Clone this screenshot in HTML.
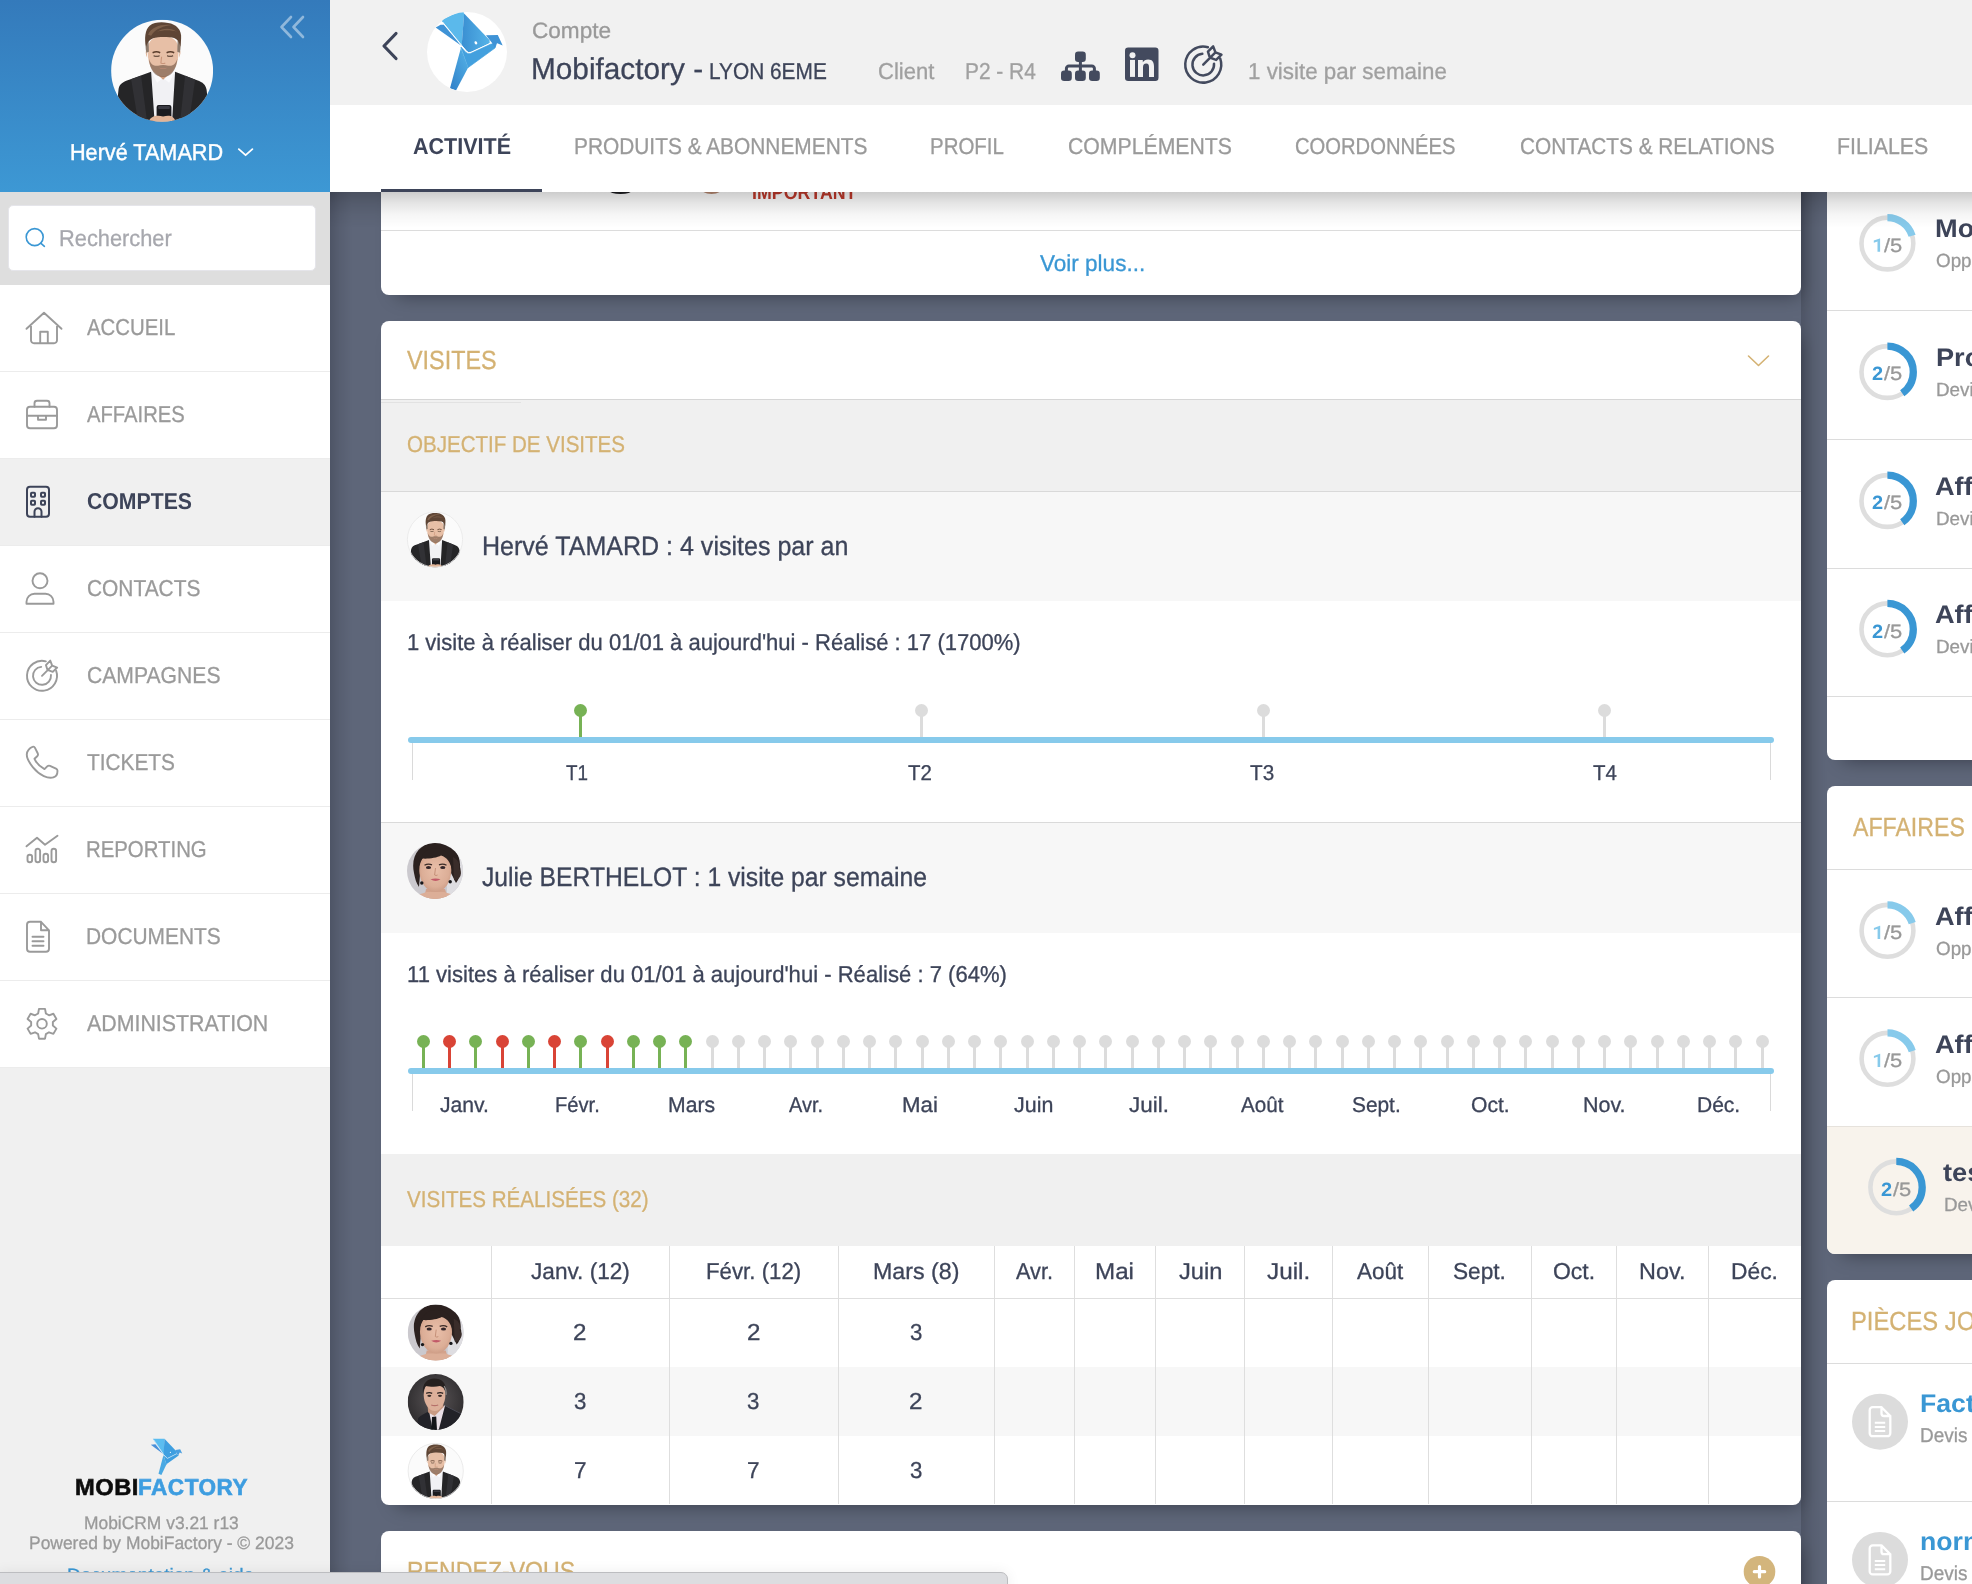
<!DOCTYPE html>
<html lang="fr"><head><meta charset="utf-8"><title>MobiCRM</title><style>
*{box-sizing:border-box;margin:0;padding:0}
html,body{width:1972px;height:1584px;overflow:hidden;background:#5e6679;font-family:"Liberation Sans",sans-serif}
#root{position:absolute;left:0;top:0;width:1972px;height:1584px;overflow:hidden;will-change:transform}
.a{position:absolute}
.t{position:absolute;white-space:nowrap;display:inline-block;text-rendering:geometricPrecision;transform-origin:0 50%;-webkit-text-stroke:.3px}
.b{-webkit-text-stroke:0}
svg{position:absolute;overflow:visible}
.card{position:absolute;background:#fff;border-radius:8px;box-shadow:7px 9px 18px -9px rgba(0,0,10,.42);overflow:hidden}
.hl{position:absolute;height:1px;background:#dcdcdc}
.vl{position:absolute;width:1px;background:#dedede}
</style></head><body>
<div id="root">
<div class="a" style="left:330px;top:192px;width:22px;height:1392px;background:linear-gradient(to right,rgba(0,0,10,.17),rgba(0,0,10,.07) 45%,rgba(0,0,10,0))"></div><div class="a" style="left:1801px;top:192px;width:26px;height:1392px;background:linear-gradient(to right,rgba(0,0,10,.17),rgba(0,0,10,.07) 45%,rgba(0,0,10,0))"></div>
<div class="card" style="left:381px;top:120px;width:1420px;height:175px"></div>
<div class="hl" style="left:381px;top:230px;width:1420px"></div>
<div class="a" style="left:609px;top:186px;width:23px;height:7.500px;border-radius:50%;background:#1c1c20"></div><div class="a" style="left:700px;top:180px;width:23px;height:13.500px;border-radius:50%;background:#b98a72"></div>
<span class="t b" style="left:752.16px;top:183px;font-size:20px;line-height:20px;color:#c0392b;font-weight:700;transform:scaleX(0.8899);">IMPORTANT</span>
<span class="t" style="left:1039.56px;top:252px;font-size:23px;line-height:23px;color:#3a97d4;transform:scaleX(0.9795);">Voir plus...</span>
<div class="card" style="left:381px;top:321px;width:1420px;height:1183.500px"></div>
<span class="t" style="left:407.26px;top:347px;font-size:26.3px;line-height:26.3px;color:#d4b273;transform:scaleX(0.8890);">VISITES</span>
<svg style="left:1747px;top:354px" width="24" height="14" viewBox="0 0 24 14"><path d="M1.500 2 L11.500 11.500 L21.500 2" fill="none" stroke="#d4b273" stroke-width="1.600" stroke-linecap="round" stroke-linejoin="round"/></svg>
<div class="a" style="left:381px;top:399px;width:1420px;height:93px;background:#f0f0f0;border-top:1px solid #d6d6d6;border-bottom:1px solid #d9d9d9"></div>
<div class="a" style="left:381px;top:402px;width:140px;height:1px;background:#e2e2e2"></div>
<span class="t" style="left:406.73px;top:433px;font-size:23px;line-height:23px;color:#d4b273;transform:scaleX(0.8931);">OBJECTIF DE VISITES</span>
<div class="a" style="left:381px;top:492px;width:1420px;height:109px;background:#f7f7f7"></div>
<svg style="left:407px;top:511px" width="56" height="56" viewBox="0 0 102 102"><g transform="translate(0.000,0.911)"><defs><clipPath id="h407_511"><circle cx="51" cy="51" r="51"/></clipPath></defs>
<g clip-path="url(#h407_511)"><rect width="102" height="102" fill="#fbfbfb"/>
<path d="M4 102 L7.500 69 C8.500 64 12 62 18 60 L40 52 L52 66 L64 52 L86 60.500 C92 62.500 94.500 65 95.500 70 L99 102 Z" fill="#252527"/>
<path d="M20 59.500 L30 56 L36 102 L27 102 Z M84 60 L74 56 L69 102 L78 102 Z" fill="#313135"/>
<path d="M40 52 L43.500 102 L61 102 L64 52 L52 58 Z" fill="#f1f1f4"/>
<path d="M40 51.500 L46 63 L52 58 L58 63 L64 51.500 L58 48 L46 48 Z" fill="#fafafc"/>
<path d="M43.500 42 L43.500 52 L52 60 L60.500 52 L60.500 42 Z" fill="#cf9d7e"/>
<path d="M36.500 31 C36.500 21 42 16.500 52 16.500 C62 16.500 67.500 21 67.500 31 C67.500 43 63 56 52 56.500 C41 56 36.500 43 36.500 31 Z" fill="#e7bfa6"/>
<path d="M35.300 30 q-1.600 3 .800 8 z M68.700 30 q1.600 3 -.800 8 z" fill="#d9a787"/>
<path d="M37.800 39 C38.500 50 44 57.300 52 57.300 C60 57.300 65.500 50 66.200 39 C64 45.500 61 46.500 57 46 C54 45 50 45 47 46 C43 46.500 40 45.500 37.800 39 Z" fill="#6f5443" opacity=".62"/>
<path d="M47.500 47.800 q4.500 1.800 9 0 q-4.500 3.200 -9 0 z" fill="#c98f7a"/>
<path d="M35.200 33 C34.300 28 34.200 24 35 20 L37.500 21 L37.800 32 Z M68.800 33 C69.700 28 69.800 24 69 20 L66.500 21 L66.200 32 Z" fill="#8c7a6c"/>
<path d="M35 27 C33 19 34 10 38.500 6 C43 2.500 50 2 57 3.200 C65 4.200 71 10 70 19 C69.800 22 69.700 24.500 69.300 27 C68.500 23 67 20 63 18.300 C57 16.800 47 17 42 18.500 C38 20 36 23 35 27 Z" fill="#5e4535"/>
<path d="M37 15 C40 7 52 4 60 5.500 C54 6 44 8.500 40 16 Z M46 12 C52 8 60 8 66 12 C60 10 52 10 46 12 Z" fill="#8a6a52" opacity=".75"/>
<path d="M41.500 33 q3.800 -1.800 7.600 0 M55.500 33 q3.800 -1.800 7.600 0" stroke="#5a3d2c" stroke-width="1.500" fill="none"/>
<path d="M42.500 36 q3 1.200 6 0 M56 36 q3 1.200 6 0" stroke="#4a3528" stroke-width="1.100" fill="none"/>
<path d="M50.500 37 L49.800 43.200 q2.200 1.200 4.400 0" stroke="#c9957a" stroke-width="1.100" fill="none"/>
<rect x="45.500" y="85.300" width="14.800" height="13" rx="2" fill="#1b1b1f"/><rect x="47" y="86.300" width="11.800" height="3" rx="1" fill="#3a3a42"/>
<path d="M37.500 102 C39.500 96 46 95 52 96.800 C58 95 63 96 64.500 102 Z" fill="#e2b497"/></g><circle cx="51" cy="51" r="50.300" fill="none" stroke="#e6e6e6" stroke-width="1.400"/></g></svg>
<span class="t" style="left:481.74px;top:533px;font-size:26.5px;line-height:26.5px;color:#3d4459;transform:scaleX(0.9447);">Hervé TAMARD : 4 visites par an</span>
<span class="t" style="left:407.19px;top:631px;font-size:23px;line-height:23px;color:#3d4459;transform:scaleX(0.9572);">1 visite à réaliser du 01/01 à aujourd'hui - Réalisé : 17 (1700%)</span>
<div class="a" style="left:578.6px;top:710.8px;width:3px;height:27.200000000000045px;background:#77b255"></div><div class="a" style="left:573.6px;top:704.3px;width:13px;height:13px;border-radius:50%;background:#77b255"></div>
<div class="a" style="left:920.1px;top:710.8px;width:3px;height:27.200000000000045px;background:#dcdcdc"></div><div class="a" style="left:915.1px;top:704.3px;width:13px;height:13px;border-radius:50%;background:#dcdcdc"></div>
<div class="a" style="left:1261.6px;top:710.8px;width:3px;height:27.200000000000045px;background:#dcdcdc"></div><div class="a" style="left:1256.6px;top:704.3px;width:13px;height:13px;border-radius:50%;background:#dcdcdc"></div>
<div class="a" style="left:1603.1px;top:710.8px;width:3px;height:27.200000000000045px;background:#dcdcdc"></div><div class="a" style="left:1598.1px;top:704.3px;width:13px;height:13px;border-radius:50%;background:#dcdcdc"></div>
<div class="a" style="left:407.500px;top:737.0px;width:1366.500px;height:5.900px;border-radius:3px;background:#87caeb"></div>
<div class="a" style="left:411.500px;top:742.8px;width:1.500px;height:37px;background:#dadada"></div>
<div class="a" style="left:1769.500px;top:742.8px;width:1.500px;height:37px;background:#dadada"></div>
<span class="t" style="left:565.60px;top:763px;font-size:21.4px;line-height:21.4px;color:#3d4459;transform:scaleX(0.8796);">T1</span>
<span class="t" style="left:907.87px;top:763px;font-size:21.4px;line-height:21.4px;color:#3d4459;transform:scaleX(0.9555);">T2</span>
<span class="t" style="left:1250.22px;top:763px;font-size:21.4px;line-height:21.4px;color:#3d4459;transform:scaleX(0.9666);">T3</span>
<span class="t" style="left:1592.72px;top:763px;font-size:21.4px;line-height:21.4px;color:#3d4459;transform:scaleX(0.9573);">T4</span>
<div class="hl" style="left:381px;top:822px;width:1420px;background:#dadada"></div>
<div class="a" style="left:381px;top:823px;width:1420px;height:110px;background:#f7f7f7"></div>
<svg style="left:407px;top:843px" width="56" height="56" viewBox="0 0 56 56"><defs><clipPath id="j407_843"><circle cx="28" cy="28" r="28"/></clipPath>
<radialGradient id="gj407_843" cx=".5" cy=".45" r=".6"><stop offset="0" stop-color="#e9bfa9"/><stop offset=".7" stop-color="#dcae97"/><stop offset="1" stop-color="#c99780"/></radialGradient></defs>
<g clip-path="url(#j407_843)"><rect width="56" height="56" fill="#cbc9ce"/><rect x="40" width="16" height="56" fill="#dedde1"/>
<path d="M7 30 C3 12 14 -1 29 0 C44 -1 54 10 53 24 C55 30 52 36 49 40 L44 30 L13 32 L12 44 C9 40 8 35 7 30 Z" fill="#2b211f"/>
<path d="M46 14 q8 4 6 12 q4 4 0 9 q-3 3 -5 2 z" fill="#3a2d2a"/>
<path d="M17 56 L19 46 L38 46 L41 56 Z" fill="#d3a28b"/>
<path d="M2 60 C6 52 14 51 20 49 L37 49 C44 51 50 52 54 60 Z" fill="#dcae97"/>
<path d="M12.300 27 C12.300 15 19 9.500 28.500 9.500 C38 9.500 44.300 15 44.300 27 C44.300 38 38 49 28.500 49 C19 49 12.300 38 12.300 27 Z" fill="url(#gj407_843)"/>
<path d="M11.500 27 C11 13 19 5 28.500 5.500 C38 5 46 12 45 27 C43.500 19 40 14.500 34 12.500 C30 15 20 16 15.500 15.500 C13 19 12 22 11.500 27 Z" fill="#2b211f"/>
<path d="M17.500 22.300 q3.500 -2.200 7.500 -.500 M32 21.800 q4 -1.700 7.500 .500" stroke="#3a2a26" stroke-width="1.300" fill="none"/>
<ellipse cx="21.500" cy="24.500" rx="2.600" ry="1.500" fill="#33262a"/><ellipse cx="35.800" cy="24.500" rx="2.600" ry="1.500" fill="#33262a"/>
<path d="M28.500 25 L27.600 32 q1.500 1 3 0" stroke="#c48f78" stroke-width="1" fill="none"/>
<path d="M23.500 36.200 q5 -1.600 10 0 q-5 3.600 -10 0 z" fill="#c25a68"/>
<circle cx="14.800" cy="40" r="1.700" fill="#17171a"/><circle cx="43.200" cy="38.800" r="1.700" fill="#17171a"/></g></svg>
<span class="t" style="left:482.34px;top:864px;font-size:26.5px;line-height:26.5px;color:#3d4459;transform:scaleX(0.9313);">Julie BERTHELOT : 1 visite par semaine</span>
<span class="t" style="left:407.19px;top:963px;font-size:23px;line-height:23px;color:#3d4459;transform:scaleX(0.9594);">11 visites à réaliser du 01/01 à aujourd'hui - Réalisé : 7 (64%)</span>
<div class="a" style="left:421.8px;top:1041.9px;width:3px;height:27.199999999999818px;background:#77b255"></div><div class="a" style="left:416.8px;top:1035.4px;width:13px;height:13px;border-radius:50%;background:#77b255"></div>
<div class="a" style="left:448.1px;top:1041.9px;width:3px;height:27.199999999999818px;background:#d94436"></div><div class="a" style="left:443.1px;top:1035.4px;width:13px;height:13px;border-radius:50%;background:#d94436"></div>
<div class="a" style="left:474.3px;top:1041.9px;width:3px;height:27.199999999999818px;background:#77b255"></div><div class="a" style="left:469.3px;top:1035.4px;width:13px;height:13px;border-radius:50%;background:#77b255"></div>
<div class="a" style="left:500.6px;top:1041.9px;width:3px;height:27.199999999999818px;background:#d94436"></div><div class="a" style="left:495.6px;top:1035.4px;width:13px;height:13px;border-radius:50%;background:#d94436"></div>
<div class="a" style="left:526.8px;top:1041.9px;width:3px;height:27.199999999999818px;background:#77b255"></div><div class="a" style="left:521.8px;top:1035.4px;width:13px;height:13px;border-radius:50%;background:#77b255"></div>
<div class="a" style="left:553.0px;top:1041.9px;width:3px;height:27.199999999999818px;background:#d94436"></div><div class="a" style="left:548.0px;top:1035.4px;width:13px;height:13px;border-radius:50%;background:#d94436"></div>
<div class="a" style="left:579.3px;top:1041.9px;width:3px;height:27.199999999999818px;background:#77b255"></div><div class="a" style="left:574.3px;top:1035.4px;width:13px;height:13px;border-radius:50%;background:#77b255"></div>
<div class="a" style="left:605.5px;top:1041.9px;width:3px;height:27.199999999999818px;background:#d94436"></div><div class="a" style="left:600.5px;top:1035.4px;width:13px;height:13px;border-radius:50%;background:#d94436"></div>
<div class="a" style="left:631.8px;top:1041.9px;width:3px;height:27.199999999999818px;background:#77b255"></div><div class="a" style="left:626.8px;top:1035.4px;width:13px;height:13px;border-radius:50%;background:#77b255"></div>
<div class="a" style="left:658.0px;top:1041.9px;width:3px;height:27.199999999999818px;background:#77b255"></div><div class="a" style="left:653.0px;top:1035.4px;width:13px;height:13px;border-radius:50%;background:#77b255"></div>
<div class="a" style="left:684.3px;top:1041.9px;width:3px;height:27.199999999999818px;background:#77b255"></div><div class="a" style="left:679.3px;top:1035.4px;width:13px;height:13px;border-radius:50%;background:#77b255"></div>
<div class="a" style="left:710.5px;top:1041.9px;width:3px;height:27.199999999999818px;background:#dcdcdc"></div><div class="a" style="left:705.5px;top:1035.4px;width:13px;height:13px;border-radius:50%;background:#dcdcdc"></div>
<div class="a" style="left:736.8px;top:1041.9px;width:3px;height:27.199999999999818px;background:#dcdcdc"></div><div class="a" style="left:731.8px;top:1035.4px;width:13px;height:13px;border-radius:50%;background:#dcdcdc"></div>
<div class="a" style="left:763.0px;top:1041.9px;width:3px;height:27.199999999999818px;background:#dcdcdc"></div><div class="a" style="left:758.0px;top:1035.4px;width:13px;height:13px;border-radius:50%;background:#dcdcdc"></div>
<div class="a" style="left:789.3px;top:1041.9px;width:3px;height:27.199999999999818px;background:#dcdcdc"></div><div class="a" style="left:784.3px;top:1035.4px;width:13px;height:13px;border-radius:50%;background:#dcdcdc"></div>
<div class="a" style="left:815.5px;top:1041.9px;width:3px;height:27.199999999999818px;background:#dcdcdc"></div><div class="a" style="left:810.5px;top:1035.4px;width:13px;height:13px;border-radius:50%;background:#dcdcdc"></div>
<div class="a" style="left:841.8px;top:1041.9px;width:3px;height:27.199999999999818px;background:#dcdcdc"></div><div class="a" style="left:836.8px;top:1035.4px;width:13px;height:13px;border-radius:50%;background:#dcdcdc"></div>
<div class="a" style="left:868.0px;top:1041.9px;width:3px;height:27.199999999999818px;background:#dcdcdc"></div><div class="a" style="left:863.0px;top:1035.4px;width:13px;height:13px;border-radius:50%;background:#dcdcdc"></div>
<div class="a" style="left:894.3px;top:1041.9px;width:3px;height:27.199999999999818px;background:#dcdcdc"></div><div class="a" style="left:889.3px;top:1035.4px;width:13px;height:13px;border-radius:50%;background:#dcdcdc"></div>
<div class="a" style="left:920.5px;top:1041.9px;width:3px;height:27.199999999999818px;background:#dcdcdc"></div><div class="a" style="left:915.5px;top:1035.4px;width:13px;height:13px;border-radius:50%;background:#dcdcdc"></div>
<div class="a" style="left:946.8px;top:1041.9px;width:3px;height:27.199999999999818px;background:#dcdcdc"></div><div class="a" style="left:941.8px;top:1035.4px;width:13px;height:13px;border-radius:50%;background:#dcdcdc"></div>
<div class="a" style="left:973.0px;top:1041.9px;width:3px;height:27.199999999999818px;background:#dcdcdc"></div><div class="a" style="left:968.0px;top:1035.4px;width:13px;height:13px;border-radius:50%;background:#dcdcdc"></div>
<div class="a" style="left:999.3px;top:1041.9px;width:3px;height:27.199999999999818px;background:#dcdcdc"></div><div class="a" style="left:994.3px;top:1035.4px;width:13px;height:13px;border-radius:50%;background:#dcdcdc"></div>
<div class="a" style="left:1025.5px;top:1041.9px;width:3px;height:27.199999999999818px;background:#dcdcdc"></div><div class="a" style="left:1020.5px;top:1035.4px;width:13px;height:13px;border-radius:50%;background:#dcdcdc"></div>
<div class="a" style="left:1051.8px;top:1041.9px;width:3px;height:27.199999999999818px;background:#dcdcdc"></div><div class="a" style="left:1046.8px;top:1035.4px;width:13px;height:13px;border-radius:50%;background:#dcdcdc"></div>
<div class="a" style="left:1078.0px;top:1041.9px;width:3px;height:27.199999999999818px;background:#dcdcdc"></div><div class="a" style="left:1073.0px;top:1035.4px;width:13px;height:13px;border-radius:50%;background:#dcdcdc"></div>
<div class="a" style="left:1104.3px;top:1041.9px;width:3px;height:27.199999999999818px;background:#dcdcdc"></div><div class="a" style="left:1099.3px;top:1035.4px;width:13px;height:13px;border-radius:50%;background:#dcdcdc"></div>
<div class="a" style="left:1130.5px;top:1041.9px;width:3px;height:27.199999999999818px;background:#dcdcdc"></div><div class="a" style="left:1125.5px;top:1035.4px;width:13px;height:13px;border-radius:50%;background:#dcdcdc"></div>
<div class="a" style="left:1156.8px;top:1041.9px;width:3px;height:27.199999999999818px;background:#dcdcdc"></div><div class="a" style="left:1151.8px;top:1035.4px;width:13px;height:13px;border-radius:50%;background:#dcdcdc"></div>
<div class="a" style="left:1183.0px;top:1041.9px;width:3px;height:27.199999999999818px;background:#dcdcdc"></div><div class="a" style="left:1178.0px;top:1035.4px;width:13px;height:13px;border-radius:50%;background:#dcdcdc"></div>
<div class="a" style="left:1209.3px;top:1041.9px;width:3px;height:27.199999999999818px;background:#dcdcdc"></div><div class="a" style="left:1204.3px;top:1035.4px;width:13px;height:13px;border-radius:50%;background:#dcdcdc"></div>
<div class="a" style="left:1235.5px;top:1041.9px;width:3px;height:27.199999999999818px;background:#dcdcdc"></div><div class="a" style="left:1230.5px;top:1035.4px;width:13px;height:13px;border-radius:50%;background:#dcdcdc"></div>
<div class="a" style="left:1261.8px;top:1041.9px;width:3px;height:27.199999999999818px;background:#dcdcdc"></div><div class="a" style="left:1256.8px;top:1035.4px;width:13px;height:13px;border-radius:50%;background:#dcdcdc"></div>
<div class="a" style="left:1288.0px;top:1041.9px;width:3px;height:27.199999999999818px;background:#dcdcdc"></div><div class="a" style="left:1283.0px;top:1035.4px;width:13px;height:13px;border-radius:50%;background:#dcdcdc"></div>
<div class="a" style="left:1314.3px;top:1041.9px;width:3px;height:27.199999999999818px;background:#dcdcdc"></div><div class="a" style="left:1309.3px;top:1035.4px;width:13px;height:13px;border-radius:50%;background:#dcdcdc"></div>
<div class="a" style="left:1340.5px;top:1041.9px;width:3px;height:27.199999999999818px;background:#dcdcdc"></div><div class="a" style="left:1335.5px;top:1035.4px;width:13px;height:13px;border-radius:50%;background:#dcdcdc"></div>
<div class="a" style="left:1366.8px;top:1041.9px;width:3px;height:27.199999999999818px;background:#dcdcdc"></div><div class="a" style="left:1361.8px;top:1035.4px;width:13px;height:13px;border-radius:50%;background:#dcdcdc"></div>
<div class="a" style="left:1393.0px;top:1041.9px;width:3px;height:27.199999999999818px;background:#dcdcdc"></div><div class="a" style="left:1388.0px;top:1035.4px;width:13px;height:13px;border-radius:50%;background:#dcdcdc"></div>
<div class="a" style="left:1419.3px;top:1041.9px;width:3px;height:27.199999999999818px;background:#dcdcdc"></div><div class="a" style="left:1414.3px;top:1035.4px;width:13px;height:13px;border-radius:50%;background:#dcdcdc"></div>
<div class="a" style="left:1445.5px;top:1041.9px;width:3px;height:27.199999999999818px;background:#dcdcdc"></div><div class="a" style="left:1440.5px;top:1035.4px;width:13px;height:13px;border-radius:50%;background:#dcdcdc"></div>
<div class="a" style="left:1471.8px;top:1041.9px;width:3px;height:27.199999999999818px;background:#dcdcdc"></div><div class="a" style="left:1466.8px;top:1035.4px;width:13px;height:13px;border-radius:50%;background:#dcdcdc"></div>
<div class="a" style="left:1498.0px;top:1041.9px;width:3px;height:27.199999999999818px;background:#dcdcdc"></div><div class="a" style="left:1493.0px;top:1035.4px;width:13px;height:13px;border-radius:50%;background:#dcdcdc"></div>
<div class="a" style="left:1524.3px;top:1041.9px;width:3px;height:27.199999999999818px;background:#dcdcdc"></div><div class="a" style="left:1519.3px;top:1035.4px;width:13px;height:13px;border-radius:50%;background:#dcdcdc"></div>
<div class="a" style="left:1550.5px;top:1041.9px;width:3px;height:27.199999999999818px;background:#dcdcdc"></div><div class="a" style="left:1545.5px;top:1035.4px;width:13px;height:13px;border-radius:50%;background:#dcdcdc"></div>
<div class="a" style="left:1576.8px;top:1041.9px;width:3px;height:27.199999999999818px;background:#dcdcdc"></div><div class="a" style="left:1571.8px;top:1035.4px;width:13px;height:13px;border-radius:50%;background:#dcdcdc"></div>
<div class="a" style="left:1603.0px;top:1041.9px;width:3px;height:27.199999999999818px;background:#dcdcdc"></div><div class="a" style="left:1598.0px;top:1035.4px;width:13px;height:13px;border-radius:50%;background:#dcdcdc"></div>
<div class="a" style="left:1629.3px;top:1041.9px;width:3px;height:27.199999999999818px;background:#dcdcdc"></div><div class="a" style="left:1624.3px;top:1035.4px;width:13px;height:13px;border-radius:50%;background:#dcdcdc"></div>
<div class="a" style="left:1655.5px;top:1041.9px;width:3px;height:27.199999999999818px;background:#dcdcdc"></div><div class="a" style="left:1650.5px;top:1035.4px;width:13px;height:13px;border-radius:50%;background:#dcdcdc"></div>
<div class="a" style="left:1681.8px;top:1041.9px;width:3px;height:27.199999999999818px;background:#dcdcdc"></div><div class="a" style="left:1676.8px;top:1035.4px;width:13px;height:13px;border-radius:50%;background:#dcdcdc"></div>
<div class="a" style="left:1708.0px;top:1041.9px;width:3px;height:27.199999999999818px;background:#dcdcdc"></div><div class="a" style="left:1703.0px;top:1035.4px;width:13px;height:13px;border-radius:50%;background:#dcdcdc"></div>
<div class="a" style="left:1734.3px;top:1041.9px;width:3px;height:27.199999999999818px;background:#dcdcdc"></div><div class="a" style="left:1729.3px;top:1035.4px;width:13px;height:13px;border-radius:50%;background:#dcdcdc"></div>
<div class="a" style="left:1760.5px;top:1041.9px;width:3px;height:27.199999999999818px;background:#dcdcdc"></div><div class="a" style="left:1755.5px;top:1035.4px;width:13px;height:13px;border-radius:50%;background:#dcdcdc"></div>
<div class="a" style="left:407.500px;top:1068.1px;width:1366.500px;height:5.900px;border-radius:3px;background:#87caeb"></div>
<div class="a" style="left:411.500px;top:1073.9px;width:1.500px;height:37px;background:#dadada"></div>
<div class="a" style="left:1769.500px;top:1073.9px;width:1.500px;height:37px;background:#dadada"></div>
<span class="t" style="left:439.58px;top:1095px;font-size:21.4px;line-height:21.4px;color:#3d4459;transform:scaleX(0.9883);">Janv.</span>
<span class="t" style="left:555.13px;top:1095px;font-size:21.4px;line-height:21.4px;color:#3d4459;transform:scaleX(0.9420);">Févr.</span>
<span class="t" style="left:667.53px;top:1095px;font-size:21.4px;line-height:21.4px;color:#3d4459;transform:scaleX(0.9893);">Mars</span>
<span class="t" style="left:789.37px;top:1095px;font-size:21.4px;line-height:21.4px;color:#3d4459;transform:scaleX(0.9321);">Avr.</span>
<span class="t" style="left:901.50px;top:1095px;font-size:21.4px;line-height:21.4px;color:#3d4459;transform:scaleX(1.0415);">Mai</span>
<span class="t" style="left:1014.44px;top:1095px;font-size:21.4px;line-height:21.4px;color:#3d4459;transform:scaleX(1.0021);">Juin</span>
<span class="t" style="left:1128.57px;top:1095px;font-size:21.4px;line-height:21.4px;color:#3d4459;transform:scaleX(1.0480);">Juil.</span>
<span class="t" style="left:1240.61px;top:1095px;font-size:21.4px;line-height:21.4px;color:#3d4459;transform:scaleX(0.9642);">Août</span>
<span class="t" style="left:1351.94px;top:1095px;font-size:21.4px;line-height:21.4px;color:#3d4459;transform:scaleX(0.9752);">Sept.</span>
<span class="t" style="left:1471.06px;top:1095px;font-size:21.4px;line-height:21.4px;color:#3d4459;transform:scaleX(0.9859);">Oct.</span>
<span class="t" style="left:1582.61px;top:1095px;font-size:21.4px;line-height:21.4px;color:#3d4459;transform:scaleX(1.0041);">Nov.</span>
<span class="t" style="left:1696.50px;top:1095px;font-size:21.4px;line-height:21.4px;color:#3d4459;transform:scaleX(0.9821);">Déc.</span>
<div class="a" style="left:381px;top:1153.500px;width:1420px;height:92px;background:#f0f0f0"></div>
<span class="t" style="left:407.40px;top:1188px;font-size:23px;line-height:23px;color:#d4b273;transform:scaleX(0.8958);">VISITES RÉALISÉES (32)</span>
<div class="a" style="left:381px;top:1367px;width:1420px;height:69px;background:#f7f7f7"></div>
<div class="hl" style="left:381px;top:1298px;width:1420px;background:#dedede"></div>
<div class="vl" style="left:490.5px;top:1245.500px;height:258.500px"></div>
<div class="vl" style="left:668.5px;top:1245.500px;height:258.500px"></div>
<div class="vl" style="left:838.0px;top:1245.500px;height:258.500px"></div>
<div class="vl" style="left:994.0px;top:1245.500px;height:258.500px"></div>
<div class="vl" style="left:1074.0px;top:1245.500px;height:258.500px"></div>
<div class="vl" style="left:1155.0px;top:1245.500px;height:258.500px"></div>
<div class="vl" style="left:1244.0px;top:1245.500px;height:258.500px"></div>
<div class="vl" style="left:1332.0px;top:1245.500px;height:258.500px"></div>
<div class="vl" style="left:1428.0px;top:1245.500px;height:258.500px"></div>
<div class="vl" style="left:1531.0px;top:1245.500px;height:258.500px"></div>
<div class="vl" style="left:1616.0px;top:1245.500px;height:258.500px"></div>
<div class="vl" style="left:1708.0px;top:1245.500px;height:258.500px"></div>
<span class="t" style="left:530.60px;top:1260px;font-size:23px;line-height:23px;color:#3d4459;transform:scaleX(0.9833);">Janv. (12)</span>
<span class="t" style="left:705.91px;top:1260px;font-size:23px;line-height:23px;color:#3d4459;transform:scaleX(0.9679);">Févr. (12)</span>
<span class="t" style="left:872.58px;top:1260px;font-size:23px;line-height:23px;color:#3d4459;transform:scaleX(1.0100);">Mars (8)</span>
<span class="t" style="left:1016.34px;top:1260px;font-size:23px;line-height:23px;color:#3d4459;transform:scaleX(0.9429);">Avr.</span>
<span class="t" style="left:1095.17px;top:1260px;font-size:23px;line-height:23px;color:#3d4459;transform:scaleX(1.0510);">Mai</span>
<span class="t" style="left:1178.53px;top:1260px;font-size:23px;line-height:23px;color:#3d4459;transform:scaleX(1.0281);">Juin</span>
<span class="t" style="left:1267.16px;top:1260px;font-size:23px;line-height:23px;color:#3d4459;transform:scaleX(1.0580);">Juil.</span>
<span class="t" style="left:1357.19px;top:1260px;font-size:23px;line-height:23px;color:#3d4459;transform:scaleX(0.9756);">Août</span>
<span class="t" style="left:1453.43px;top:1260px;font-size:23px;line-height:23px;color:#3d4459;transform:scaleX(0.9851);">Sept.</span>
<span class="t" style="left:1553.44px;top:1260px;font-size:23px;line-height:23px;color:#3d4459;transform:scaleX(0.9978);">Oct.</span>
<span class="t" style="left:1639.22px;top:1260px;font-size:23px;line-height:23px;color:#3d4459;transform:scaleX(1.0177);">Nov.</span>
<span class="t" style="left:1731.17px;top:1260px;font-size:23px;line-height:23px;color:#3d4459;transform:scaleX(0.9918);">Déc.</span>
<span class="t" style="left:573.19px;top:1321px;font-size:23px;line-height:23px;color:#3d4459;transform:scaleX(1.0517);">2</span>
<span class="t" style="left:746.89px;top:1321px;font-size:23px;line-height:23px;color:#3d4459;transform:scaleX(1.0517);">2</span>
<span class="t" style="left:909.74px;top:1321px;font-size:23px;line-height:23px;color:#3d4459;transform:scaleX(0.9676);">3</span>
<span class="t" style="left:573.74px;top:1390px;font-size:23px;line-height:23px;color:#3d4459;transform:scaleX(0.9676);">3</span>
<span class="t" style="left:747.44px;top:1390px;font-size:23px;line-height:23px;color:#3d4459;transform:scaleX(0.9676);">3</span>
<span class="t" style="left:909.19px;top:1390px;font-size:23px;line-height:23px;color:#3d4459;transform:scaleX(1.0517);">2</span>
<span class="t" style="left:573.65px;top:1459px;font-size:23px;line-height:23px;color:#3d4459;transform:scaleX(0.9808);">7</span>
<span class="t" style="left:747.35px;top:1459px;font-size:23px;line-height:23px;color:#3d4459;transform:scaleX(0.9808);">7</span>
<span class="t" style="left:909.74px;top:1459px;font-size:23px;line-height:23px;color:#3d4459;transform:scaleX(0.9676);">3</span>
<svg style="left:407px;top:1304px" width="56" height="56" viewBox="0 0 56 56"><g transform="translate(0.700,0.600)"><defs><clipPath id="j407_1304"><circle cx="28" cy="28" r="28"/></clipPath>
<radialGradient id="gj407_1304" cx=".5" cy=".45" r=".6"><stop offset="0" stop-color="#e9bfa9"/><stop offset=".7" stop-color="#dcae97"/><stop offset="1" stop-color="#c99780"/></radialGradient></defs>
<g clip-path="url(#j407_1304)"><rect width="56" height="56" fill="#cbc9ce"/><rect x="40" width="16" height="56" fill="#dedde1"/>
<path d="M7 30 C3 12 14 -1 29 0 C44 -1 54 10 53 24 C55 30 52 36 49 40 L44 30 L13 32 L12 44 C9 40 8 35 7 30 Z" fill="#2b211f"/>
<path d="M46 14 q8 4 6 12 q4 4 0 9 q-3 3 -5 2 z" fill="#3a2d2a"/>
<path d="M17 56 L19 46 L38 46 L41 56 Z" fill="#d3a28b"/>
<path d="M2 60 C6 52 14 51 20 49 L37 49 C44 51 50 52 54 60 Z" fill="#dcae97"/>
<path d="M12.300 27 C12.300 15 19 9.500 28.500 9.500 C38 9.500 44.300 15 44.300 27 C44.300 38 38 49 28.500 49 C19 49 12.300 38 12.300 27 Z" fill="url(#gj407_1304)"/>
<path d="M11.500 27 C11 13 19 5 28.500 5.500 C38 5 46 12 45 27 C43.500 19 40 14.500 34 12.500 C30 15 20 16 15.500 15.500 C13 19 12 22 11.500 27 Z" fill="#2b211f"/>
<path d="M17.500 22.300 q3.500 -2.200 7.500 -.500 M32 21.800 q4 -1.700 7.500 .500" stroke="#3a2a26" stroke-width="1.300" fill="none"/>
<ellipse cx="21.500" cy="24.500" rx="2.600" ry="1.500" fill="#33262a"/><ellipse cx="35.800" cy="24.500" rx="2.600" ry="1.500" fill="#33262a"/>
<path d="M28.500 25 L27.600 32 q1.500 1 3 0" stroke="#c48f78" stroke-width="1" fill="none"/>
<path d="M23.500 36.200 q5 -1.600 10 0 q-5 3.600 -10 0 z" fill="#c25a68"/>
<circle cx="14.800" cy="40" r="1.700" fill="#17171a"/><circle cx="43.200" cy="38.800" r="1.700" fill="#17171a"/></g></g></svg>
<svg style="left:407px;top:1374px" width="56" height="56" viewBox="0 0 56 56"><g transform="translate(0.700,0.000)"><defs><clipPath id="d407_1374"><circle cx="28" cy="28" r="28"/></clipPath>
<radialGradient id="gd407_1374" cx=".5" cy=".45" r=".55"><stop offset="0" stop-color="#5a5557"/><stop offset="1" stop-color="#2f2d2f"/></radialGradient></defs>
<g clip-path="url(#d407_1374)"><rect width="56" height="56" fill="url(#gd407_1374)"/>
<path d="M8 60 L10.500 44 C13 41 18 39 22 37 L36 31 L53 39 L56 60 Z" fill="#222228"/>
<path d="M37 31.500 L53 39.500" stroke="#55555f" stroke-width=".8"/>
<path d="M21.500 38 L25 56 L31 56 L37.500 31 L30 37 Z" fill="#e9dfe6"/>
<path d="M24.300 43 L28.500 42.500 L29.300 56 L23.500 56 Z" fill="#141418"/>
<path d="M19.500 28 L20.500 38.500 L27 42 L36 33 L35 26 Z" fill="#c99a83"/>
<path d="M16 21 C16 12 20 8.500 26.500 8.500 C33 8.500 37.700 12 37.700 21 C37.700 29 33 37 27 37 C21 37 16 29 16 21 Z" fill="#ddb09a"/>
<path d="M15.300 20 C14 9 20 4.500 26.500 4.500 C33.500 4.500 39.500 8.500 38.300 20 C37.500 15 35 12.500 32 12 C27 13.500 21 12.500 18 12 C16.500 14 15.800 17 15.300 20 Z" fill="#25201f"/>
<path d="M36.500 12 q2.500 4 1.800 9" stroke="#8a8685" stroke-width="1.200" fill="none"/>
<path d="M18.500 19.300 q3 -1.300 6 0 M29.500 19.300 q3 -1.300 6 0" stroke="#2b2220" stroke-width="1.300" fill="none"/>
<ellipse cx="21.600" cy="21.800" rx="2" ry="1.100" fill="#3a2c28"/><ellipse cx="32.300" cy="21.800" rx="2" ry="1.100" fill="#3a2c28"/>
<path d="M23.500 31 q3.500 1.300 7 0" stroke="#b5706a" stroke-width="1.200" fill="none"/></g></g></svg>
<svg style="left:407px;top:1443px" width="56" height="56" viewBox="0 0 102 102"><g transform="translate(1.275,0.000)"><defs><clipPath id="h407_1443"><circle cx="51" cy="51" r="51"/></clipPath></defs>
<g clip-path="url(#h407_1443)"><rect width="102" height="102" fill="#fbfbfb"/>
<path d="M4 102 L7.500 69 C8.500 64 12 62 18 60 L40 52 L52 66 L64 52 L86 60.500 C92 62.500 94.500 65 95.500 70 L99 102 Z" fill="#252527"/>
<path d="M20 59.500 L30 56 L36 102 L27 102 Z M84 60 L74 56 L69 102 L78 102 Z" fill="#313135"/>
<path d="M40 52 L43.500 102 L61 102 L64 52 L52 58 Z" fill="#f1f1f4"/>
<path d="M40 51.500 L46 63 L52 58 L58 63 L64 51.500 L58 48 L46 48 Z" fill="#fafafc"/>
<path d="M43.500 42 L43.500 52 L52 60 L60.500 52 L60.500 42 Z" fill="#cf9d7e"/>
<path d="M36.500 31 C36.500 21 42 16.500 52 16.500 C62 16.500 67.500 21 67.500 31 C67.500 43 63 56 52 56.500 C41 56 36.500 43 36.500 31 Z" fill="#e7bfa6"/>
<path d="M35.300 30 q-1.600 3 .800 8 z M68.700 30 q1.600 3 -.800 8 z" fill="#d9a787"/>
<path d="M37.800 39 C38.500 50 44 57.300 52 57.300 C60 57.300 65.500 50 66.200 39 C64 45.500 61 46.500 57 46 C54 45 50 45 47 46 C43 46.500 40 45.500 37.800 39 Z" fill="#6f5443" opacity=".62"/>
<path d="M47.500 47.800 q4.500 1.800 9 0 q-4.500 3.200 -9 0 z" fill="#c98f7a"/>
<path d="M35.200 33 C34.300 28 34.200 24 35 20 L37.500 21 L37.800 32 Z M68.800 33 C69.700 28 69.800 24 69 20 L66.500 21 L66.200 32 Z" fill="#8c7a6c"/>
<path d="M35 27 C33 19 34 10 38.500 6 C43 2.500 50 2 57 3.200 C65 4.200 71 10 70 19 C69.800 22 69.700 24.500 69.300 27 C68.500 23 67 20 63 18.300 C57 16.800 47 17 42 18.500 C38 20 36 23 35 27 Z" fill="#5e4535"/>
<path d="M37 15 C40 7 52 4 60 5.500 C54 6 44 8.500 40 16 Z M46 12 C52 8 60 8 66 12 C60 10 52 10 46 12 Z" fill="#8a6a52" opacity=".75"/>
<path d="M41.500 33 q3.800 -1.800 7.600 0 M55.500 33 q3.800 -1.800 7.600 0" stroke="#5a3d2c" stroke-width="1.500" fill="none"/>
<path d="M42.500 36 q3 1.200 6 0 M56 36 q3 1.200 6 0" stroke="#4a3528" stroke-width="1.100" fill="none"/>
<path d="M50.500 37 L49.800 43.200 q2.200 1.200 4.400 0" stroke="#c9957a" stroke-width="1.100" fill="none"/>
<rect x="45.500" y="85.300" width="14.800" height="13" rx="2" fill="#1b1b1f"/><rect x="47" y="86.300" width="11.800" height="3" rx="1" fill="#3a3a42"/>
<path d="M37.500 102 C39.500 96 46 95 52 96.800 C58 95 63 96 64.500 102 Z" fill="#e2b497"/></g><circle cx="51" cy="51" r="50.300" fill="none" stroke="#e6e6e6" stroke-width="1.400"/></g></svg>
<div class="card" style="left:381px;top:1531px;width:1420px;height:200px"></div>
<span class="t" style="left:406.76px;top:1558px;font-size:26.3px;line-height:26.3px;color:#d4b273;transform:scaleX(0.8787);">RENDEZ-VOUS</span>
<svg style="left:1743px;top:1555px" width="32" height="32" viewBox="-16 -16 32 32"><g transform="translate(0.500,0.700)"><circle r="15.800" fill="#d3b57c"/><path d="M-5.200 0 H5.200 M0 -5.200 V5.200" stroke="#fff" stroke-width="3.200" stroke-linecap="round"/></g></svg>
<div class="card" style="left:1827px;top:120px;width:200px;height:639.500px"></div>
<svg style="left:1855px;top:211px" width="64" height="64" viewBox="-32 -32 64 64"><g transform="translate(0.400,0.500)"><circle r="25.9" fill="none" stroke="#dedede" stroke-width="4.600"/><circle r="25.9" fill="none" stroke="#87caeb" stroke-width="7.300" stroke-dasharray="32.55 999" transform="rotate(-90)"/></g></svg><svg style="left:1873px;top:238px" width="7" height="14" viewBox="0 0 7 14"><g transform="translate(0.800,0.400)"><path d="M6.300 0 V13.400 H3.700 V3.100 L0 4.400 V2.200 L5.900 0 Z" fill="#87caeb"/></g></svg><span class="t" style="left:1884.31px;top:237px;font-size:19.3px;line-height:19.3px;color:#999;transform:scaleX(1.1362);">/5</span>
<span class="t b" style="left:1935.17px;top:217px;font-size:25.4px;line-height:25.4px;color:#3d4459;font-weight:700;transform:scaleX(1.0700);">Mofffff</span>
<span class="t" style="left:1935.56px;top:252px;font-size:19px;line-height:19px;color:#999;transform:scaleX(0.9900);">Opposssss</span>
<div class="hl" style="left:1827px;top:310.0px;width:200px"></div>
<svg style="left:1855px;top:340px" width="64" height="64" viewBox="-32 -32 64 64"><g transform="translate(0.400,0.000)"><circle r="25.9" fill="none" stroke="#dedede" stroke-width="4.600"/><circle r="25.9" fill="none" stroke="#3a97d4" stroke-width="7.300" stroke-dasharray="65.09 999" transform="rotate(-90)"/></g></svg><span class="t b" style="left:1872.39px;top:365px;font-size:19.3px;line-height:19.3px;color:#3a97d4;font-weight:700;transform:scaleX(1.0352);">2</span><span class="t" style="left:1884.31px;top:365px;font-size:19.3px;line-height:19.3px;color:#999;transform:scaleX(1.1362);">/5</span>
<span class="t b" style="left:1935.67px;top:346px;font-size:25.4px;line-height:25.4px;color:#3d4459;font-weight:700;transform:scaleX(1.0700);">Profffff</span>
<span class="t" style="left:1936.09px;top:381px;font-size:19px;line-height:19px;color:#999;transform:scaleX(0.9900);">Devisssss</span>
<div class="hl" style="left:1827px;top:438.5px;width:200px"></div>
<svg style="left:1855px;top:469px" width="64" height="64" viewBox="-32 -32 64 64"><g transform="translate(0.400,0.000)"><circle r="25.9" fill="none" stroke="#dedede" stroke-width="4.600"/><circle r="25.9" fill="none" stroke="#3a97d4" stroke-width="7.300" stroke-dasharray="65.09 999" transform="rotate(-90)"/></g></svg><span class="t b" style="left:1872.39px;top:494px;font-size:19.3px;line-height:19.3px;color:#3a97d4;font-weight:700;transform:scaleX(1.0352);">2</span><span class="t" style="left:1884.31px;top:494px;font-size:19.3px;line-height:19.3px;color:#999;transform:scaleX(1.1362);">/5</span>
<span class="t b" style="left:1935.18px;top:475px;font-size:25.4px;line-height:25.4px;color:#3d4459;font-weight:700;transform:scaleX(1.0700);">Afffffff</span>
<span class="t" style="left:1936.09px;top:510px;font-size:19px;line-height:19px;color:#999;transform:scaleX(0.9900);">Devisssss</span>
<div class="hl" style="left:1827px;top:567.5px;width:200px"></div>
<svg style="left:1855px;top:597px" width="64" height="64" viewBox="-32 -32 64 64"><g transform="translate(0.400,0.300)"><circle r="25.9" fill="none" stroke="#dedede" stroke-width="4.600"/><circle r="25.9" fill="none" stroke="#3a97d4" stroke-width="7.300" stroke-dasharray="65.09 999" transform="rotate(-90)"/></g></svg><span class="t b" style="left:1872.39px;top:623px;font-size:19.3px;line-height:19.3px;color:#3a97d4;font-weight:700;transform:scaleX(1.0352);">2</span><span class="t" style="left:1884.31px;top:623px;font-size:19.3px;line-height:19.3px;color:#999;transform:scaleX(1.1362);">/5</span>
<span class="t b" style="left:1935.18px;top:603px;font-size:25.4px;line-height:25.4px;color:#3d4459;font-weight:700;transform:scaleX(1.0700);">Afffffff</span>
<span class="t" style="left:1936.09px;top:638px;font-size:19px;line-height:19px;color:#999;transform:scaleX(0.9900);">Devisssss</span>
<div class="hl" style="left:1827px;top:695.8px;width:200px"></div>
<div class="card" style="left:1827px;top:786px;width:200px;height:467.500px"></div>
<span class="t" style="left:1852.78px;top:814px;font-size:26.3px;line-height:26.3px;color:#d4b273;transform:scaleX(0.8800);">AFFAIRES</span>
<div class="hl" style="left:1827px;top:869px;width:200px"></div>
<div class="hl" style="left:1827px;top:997px;width:200px"></div>
<div class="a" style="left:1827px;top:1126px;width:200px;height:127.500px;background:#f8f3ec;border-top:1px solid #e6e2dc;border-radius:0 0 0 8px"></div>
<svg style="left:1855px;top:898px" width="64" height="64" viewBox="-32 -32 64 64"><g transform="translate(0.500,0.800)"><circle r="25.9" fill="none" stroke="#dedede" stroke-width="4.600"/><circle r="25.9" fill="none" stroke="#87caeb" stroke-width="7.300" stroke-dasharray="32.55 999" transform="rotate(-90)"/></g></svg><svg style="left:1873px;top:925px" width="7" height="14" viewBox="0 0 7 14"><g transform="translate(0.900,0.700)"><path d="M6.300 0 V13.400 H3.700 V3.100 L0 4.400 V2.200 L5.900 0 Z" fill="#87caeb"/></g></svg><span class="t" style="left:1884.41px;top:924px;font-size:19.3px;line-height:19.3px;color:#999;transform:scaleX(1.1362);">/5</span>
<span class="t b" style="left:1935.18px;top:905px;font-size:25.4px;line-height:25.4px;color:#3d4459;font-weight:700;transform:scaleX(1.0700);">Affttttt</span>
<span class="t" style="left:1935.56px;top:940px;font-size:19px;line-height:19px;color:#999;transform:scaleX(0.9900);">Opposssss</span>
<svg style="left:1855px;top:1026px" width="64" height="64" viewBox="-32 -32 64 64"><g transform="translate(0.500,0.800)"><circle r="25.9" fill="none" stroke="#dedede" stroke-width="4.600"/><circle r="25.9" fill="none" stroke="#87caeb" stroke-width="7.300" stroke-dasharray="32.55 999" transform="rotate(-90)"/></g></svg><svg style="left:1873px;top:1053px" width="7" height="14" viewBox="0 0 7 14"><g transform="translate(0.900,0.700)"><path d="M6.300 0 V13.400 H3.700 V3.100 L0 4.400 V2.200 L5.900 0 Z" fill="#87caeb"/></g></svg><span class="t" style="left:1884.41px;top:1052px;font-size:19.3px;line-height:19.3px;color:#999;transform:scaleX(1.1362);">/5</span>
<span class="t b" style="left:1935.18px;top:1033px;font-size:25.4px;line-height:25.4px;color:#3d4459;font-weight:700;transform:scaleX(1.0700);">Affttttt</span>
<span class="t" style="left:1935.56px;top:1068px;font-size:19px;line-height:19px;color:#999;transform:scaleX(0.9900);">Opposssss</span>
<svg style="left:1864px;top:1155px" width="64" height="64" viewBox="-32 -32 64 64"><g transform="translate(0.300,0.300)"><circle r="25.9" fill="none" stroke="#dedede" stroke-width="4.600"/><circle r="25.9" fill="none" stroke="#3a97d4" stroke-width="7.300" stroke-dasharray="65.09 999" transform="rotate(-90)"/></g></svg><span class="t b" style="left:1881.29px;top:1181px;font-size:19.3px;line-height:19.3px;color:#3a97d4;font-weight:700;transform:scaleX(1.0352);">2</span><span class="t" style="left:1893.21px;top:1181px;font-size:19.3px;line-height:19.3px;color:#999;transform:scaleX(1.1362);">/5</span>
<span class="t b" style="left:1943.32px;top:1161px;font-size:25.4px;line-height:25.4px;color:#3d4459;font-weight:700;transform:scaleX(1.0700);">testtttt</span>
<span class="t" style="left:1943.89px;top:1196px;font-size:19px;line-height:19px;color:#999;transform:scaleX(0.9900);">Devsssss</span>
<div class="card" style="left:1827px;top:1280px;width:200px;height:400px"></div>
<span class="t" style="left:1851.02px;top:1308px;font-size:26.3px;line-height:26.3px;color:#d4b273;transform:scaleX(0.9038);">PIÈCES J</span>
<span class="t" style="left:1957.38px;top:1308px;font-size:26.3px;line-height:26.3px;color:#d4b273;transform:scaleX(0.9000);">OINTES</span>
<div class="hl" style="left:1827px;top:1363px;width:200px"></div>
<div class="hl" style="left:1827px;top:1501px;width:200px"></div>
<svg style="left:1852px;top:1393px" width="56" height="56" viewBox="-28 -28 56 56"><g transform="translate(0.000,0.700)"><circle r="28" fill="#dcdcdc"/>
<path d="M-10.300 -11.500 a3 3 0 0 1 3 -3 H1.500 L10.300 -5.700 V11.500 a3 3 0 0 1 -3 3 H-7.300 a3 3 0 0 1 -3 -3 Z M1.500 -14.500 V-8.200 a2.500 2.500 0 0 0 2.500 2.500 H10.300" fill="none" stroke="#fff" stroke-width="2.300" stroke-linejoin="round" stroke-linecap="round"/><path d="M-5.200 1 H5.200 M-5.200 5.200 H5.200 M-5.200 9.400 H5.200" stroke="#fff" stroke-width="2" fill="none"/></g></svg>
<svg style="left:1852px;top:1531px" width="56" height="56" viewBox="-28 -28 56 56"><g transform="translate(0.000,0.900)"><circle r="28" fill="#dcdcdc"/>
<path d="M-10.300 -11.500 a3 3 0 0 1 3 -3 H1.500 L10.300 -5.700 V11.500 a3 3 0 0 1 -3 3 H-7.300 a3 3 0 0 1 -3 -3 Z M1.500 -14.500 V-8.200 a2.500 2.500 0 0 0 2.500 2.500 H10.300" fill="none" stroke="#fff" stroke-width="2.300" stroke-linejoin="round" stroke-linecap="round"/><path d="M-5.200 1 H5.200 M-5.200 5.200 H5.200 M-5.200 9.400 H5.200" stroke="#fff" stroke-width="2" fill="none"/></g></svg>
<span class="t b" style="left:1920.20px;top:1392px;font-size:25.4px;line-height:25.4px;color:#3a97d4;font-weight:700;transform:scaleX(1.0500);">Facture</span>
<span class="t" style="left:1920.08px;top:1426px;font-size:20px;line-height:20px;color:#999;transform:scaleX(0.9504);">Devis</span>
<span class="t b" style="left:1920.18px;top:1530px;font-size:25.4px;line-height:25.4px;color:#3a97d4;font-weight:700;transform:scaleX(1.0500);">normal</span>
<span class="t" style="left:1920.08px;top:1564px;font-size:20px;line-height:20px;color:#999;transform:scaleX(0.9504);">Devis</span>
<div class="a" style="left:330px;top:0;width:1642px;height:106px;background:#f1f1f1"></div>
<svg style="left:380px;top:30px" width="20" height="32" viewBox="0 0 20 32"><path d="M16 3.500 L4 16 L16 28.500" fill="none" stroke="#3d4459" stroke-width="3.200" stroke-linecap="round" stroke-linejoin="round"/></svg>
<svg style="left:427px;top:12px" width="80" height="80" viewBox="0 0 80 80"><defs><clipPath id="lc"><circle cx="40" cy="40" r="40"/></clipPath>
<linearGradient id="lg1" x1="0" y1="0" x2="1" y2="0"><stop offset="0" stop-color="#3a8fd2"/><stop offset="1" stop-color="#56b4e8"/></linearGradient>
<linearGradient id="lg2" x1="0" y1="1" x2="1" y2="0"><stop offset="0" stop-color="#2f7fc8"/><stop offset="1" stop-color="#56b4e8"/></linearGradient></defs>
<circle cx="40" cy="40" r="40" fill="#fff"/><g clip-path="url(#lc)">
<path d="M8.700 15.600 L13.600 12.700 L16.800 12.700 L34 33.500 Z" fill="#3f93d6"/>
<path d="M14 8 L36.300 -2 L37.100 2.600 L34.700 34 Z" fill="#5bb9eb"/>
<path d="M37.100 1.500 L62.500 28 Q64 30 62 31.500 L43 40.500 Q41.500 41 40 39.500 L34.700 33.400 Z" fill="url(#lg1)"/>
<path d="M15.500 10 L39.500 39.300 Q41.500 41.300 44 40.300 L62 32 Q64 30.800 63 28.600" fill="none" stroke="#fff" stroke-width="1"/>
<path d="M33.900 35 L41.200 55.500 L68 36 L69.600 31 L63.500 32.300 L43.500 41.600 Q41 42.300 39 40.500 Z" fill="#43a0de" stroke="#43a0de" stroke-width=".7"/>
<path d="M33.900 36 L41.200 55.500 L29 78.500 L23 76.300 Z" fill="url(#lg2)"/>
<path d="M59 23.300 L70.800 22.900 L75.700 33.400 L69.600 31 L68 36 L64.700 30.500 Z" fill="#3f93d6"/>
<ellipse cx="48.900" cy="30.800" rx="1.300" ry="1.700" fill="#fff" transform="rotate(-30 48.900 30.800)"/></g></svg>
<span class="t" style="left:532.33px;top:20px;font-size:22.3px;line-height:22.3px;color:#999;transform:scaleX(1.0127);">Compte</span>
<span class="t" style="left:531.48px;top:55px;font-size:30px;line-height:30px;color:#3d4459;transform:scaleX(0.9924);">Mobifactory -</span>
<span class="t" style="left:708.76px;top:60px;font-size:23px;line-height:23px;color:#3d4459;transform:scaleX(0.9065);">LYON 6EME</span>
<span class="t" style="left:877.53px;top:60px;font-size:23px;line-height:23px;color:#a0a0a0;transform:scaleX(0.9583);">Client</span>
<span class="t" style="left:965.36px;top:60px;font-size:23px;line-height:23px;color:#a0a0a0;transform:scaleX(0.9080);">P2 - R4</span>
<span class="t" style="left:1248.47px;top:60px;font-size:23px;line-height:23px;color:#a0a0a0;transform:scaleX(0.9721);">1 visite par semaine</span>
<svg style="left:1061px;top:51px" width="39" height="30" viewBox="0 0 39 30"><g transform="translate(0.000,0.500)"><g fill="#434a5e"><rect x="14" y="0" width="10.800" height="10.500" rx="3.200"/><rect x="0" y="19" width="10.800" height="10.500" rx="3.200"/><rect x="14" y="19" width="10.800" height="10.500" rx="3.200"/><rect x="28" y="19" width="10.800" height="10.500" rx="3.200"/></g><path d="M19.400 10 V20 M5.400 20 V17 a2.500 2.500 0 0 1 2.500 -2.500 H30.900 a2.500 2.500 0 0 1 2.500 2.500 V20" fill="none" stroke="#434a5e" stroke-width="3"/></g></svg>
<svg style="left:1125px;top:47px" width="34" height="34" viewBox="0 0 34 34"><g transform="translate(0.000,0.500)"><rect width="33.500" height="33.500" rx="3.200" fill="#434a5e"/><circle cx="7.500" cy="7.700" r="3" fill="#f1f1f1"/><rect x="5" y="12.400" width="5" height="17" fill="#f1f1f1"/><path d="M13 12.400 h4.800 v2.300 c1 -1.700 2.800 -2.800 5.300 -2.800 c4.500 0 5.900 2.800 5.900 7 v10.500 h-5 v-9.500 c0 -2.300 -0.500 -3.800 -2.800 -3.800 c-2.300 0 -3.200 1.600 -3.200 3.800 v9.500 h-5 Z" fill="#f1f1f1"/></g></svg>
<svg style="left:1203px;top:64px" width="1" height="1"><g transform="translate(.25,.6)" fill="none" stroke="#434a5e" stroke-width="2.500" stroke-linecap="round" stroke-linejoin="round"><path d="M16.91 -6.16 A18.00 18.00 0 1 1 4.66 -17.39"/><path d="M10.76 -0.94 A10.80 10.80 0 1 1 -0.94 -10.76"/><path d="M0 0 L12.20 -12.20 M6.60 -7.00 L4.70 -12.90 L9.90 -18.20 L12.20 -12.20 L18.20 -9.90 L12.90 -4.70 Z"/></g></svg>
<div class="a" style="left:330px;top:105px;width:1642px;height:87px;background:#fff"></div>
<div class="a" style="left:330px;top:192px;width:1642px;height:36px;background:linear-gradient(rgba(0,0,0,.2),rgba(0,0,0,.105) 30%,rgba(0,0,0,.04) 62%,rgba(0,0,0,0))"></div>
<div class="a" style="left:381px;top:188.500px;width:161px;height:3.500px;background:#3d4459"></div>
<span class="t b" style="left:412.71px;top:135px;font-size:23px;line-height:23px;color:#3d4459;font-weight:700;transform:scaleX(0.9352);">ACTIVITÉ</span>
<span class="t" style="left:573.76px;top:135px;font-size:23px;line-height:23px;color:#9a9a9a;transform:scaleX(0.9074);">PRODUITS &amp; ABONNEMENTS</span>
<span class="t" style="left:930.19px;top:135px;font-size:23px;line-height:23px;color:#9a9a9a;transform:scaleX(0.8892);">PROFIL</span>
<span class="t" style="left:1068.16px;top:135px;font-size:23px;line-height:23px;color:#9a9a9a;transform:scaleX(0.9232);">COMPLÉMENTS</span>
<span class="t" style="left:1294.90px;top:135px;font-size:23px;line-height:23px;color:#9a9a9a;transform:scaleX(0.8784);">COORDONNÉES</span>
<span class="t" style="left:1519.68px;top:135px;font-size:23px;line-height:23px;color:#9a9a9a;transform:scaleX(0.9043);">CONTACTS &amp; RELATIONS</span>
<span class="t" style="left:1837.23px;top:135px;font-size:23px;line-height:23px;color:#9a9a9a;transform:scaleX(0.9270);">FILIALES</span>
<div class="a" style="left:0;top:0;width:330px;height:1584px;background:#f0f0f0"></div>
<div class="a" style="left:0;top:0;width:330px;height:192px;background:linear-gradient(#347abb,#3d98d4)"></div>
<svg style="left:111px;top:19px" width="102" height="102" viewBox="0 0 102 102"><g transform="translate(0.100,0.700)"><defs><clipPath id="h111_19"><circle cx="51" cy="51" r="51"/></clipPath></defs>
<g clip-path="url(#h111_19)"><rect width="102" height="102" fill="#fbfbfb"/>
<path d="M4 102 L7.500 69 C8.500 64 12 62 18 60 L40 52 L52 66 L64 52 L86 60.500 C92 62.500 94.500 65 95.500 70 L99 102 Z" fill="#252527"/>
<path d="M20 59.500 L30 56 L36 102 L27 102 Z M84 60 L74 56 L69 102 L78 102 Z" fill="#313135"/>
<path d="M40 52 L43.500 102 L61 102 L64 52 L52 58 Z" fill="#f1f1f4"/>
<path d="M40 51.500 L46 63 L52 58 L58 63 L64 51.500 L58 48 L46 48 Z" fill="#fafafc"/>
<path d="M43.500 42 L43.500 52 L52 60 L60.500 52 L60.500 42 Z" fill="#cf9d7e"/>
<path d="M36.500 31 C36.500 21 42 16.500 52 16.500 C62 16.500 67.500 21 67.500 31 C67.500 43 63 56 52 56.500 C41 56 36.500 43 36.500 31 Z" fill="#e7bfa6"/>
<path d="M35.300 30 q-1.600 3 .800 8 z M68.700 30 q1.600 3 -.800 8 z" fill="#d9a787"/>
<path d="M37.800 39 C38.500 50 44 57.300 52 57.300 C60 57.300 65.500 50 66.200 39 C64 45.500 61 46.500 57 46 C54 45 50 45 47 46 C43 46.500 40 45.500 37.800 39 Z" fill="#6f5443" opacity=".62"/>
<path d="M47.500 47.800 q4.500 1.800 9 0 q-4.500 3.200 -9 0 z" fill="#c98f7a"/>
<path d="M35.200 33 C34.300 28 34.200 24 35 20 L37.500 21 L37.800 32 Z M68.800 33 C69.700 28 69.800 24 69 20 L66.500 21 L66.200 32 Z" fill="#8c7a6c"/>
<path d="M35 27 C33 19 34 10 38.500 6 C43 2.500 50 2 57 3.200 C65 4.200 71 10 70 19 C69.800 22 69.700 24.500 69.300 27 C68.500 23 67 20 63 18.300 C57 16.800 47 17 42 18.500 C38 20 36 23 35 27 Z" fill="#5e4535"/>
<path d="M37 15 C40 7 52 4 60 5.500 C54 6 44 8.500 40 16 Z M46 12 C52 8 60 8 66 12 C60 10 52 10 46 12 Z" fill="#8a6a52" opacity=".75"/>
<path d="M41.500 33 q3.800 -1.800 7.600 0 M55.500 33 q3.800 -1.800 7.600 0" stroke="#5a3d2c" stroke-width="1.500" fill="none"/>
<path d="M42.500 36 q3 1.200 6 0 M56 36 q3 1.200 6 0" stroke="#4a3528" stroke-width="1.100" fill="none"/>
<path d="M50.500 37 L49.800 43.200 q2.200 1.200 4.400 0" stroke="#c9957a" stroke-width="1.100" fill="none"/>
<rect x="45.500" y="85.300" width="14.800" height="13" rx="2" fill="#1b1b1f"/><rect x="47" y="86.300" width="11.800" height="3" rx="1" fill="#3a3a42"/>
<path d="M37.500 102 C39.500 96 46 95 52 96.800 C58 95 63 96 64.500 102 Z" fill="#e2b497"/></g></g></svg>
<span class="t" style="left:69.86px;top:141px;font-size:23px;line-height:23px;color:#fff;transform:scaleX(0.9406);-webkit-text-stroke:.45px;">Hervé TAMARD</span>
<svg style="left:237px;top:147px" width="17" height="10" viewBox="0 0 17 10"><g transform="translate(0.100,0.600)"><path d="M1.700 1.500 L8.500 7.600 L15.300 1.500" fill="none" stroke="#fff" stroke-width="1.8" stroke-linecap="round" stroke-linejoin="round"/></g></svg>
<svg style="left:279px;top:15px" width="26" height="24" viewBox="0 0 26 24"><path d="M12 2 L2.5 12 L12 22 M24 2 L14.5 12 L24 22" fill="none" stroke="rgba(255,255,255,.45)" stroke-width="2.6" stroke-linecap="round" stroke-linejoin="round"/></svg>
<div class="a" style="left:0;top:192px;width:330px;height:93px;background:#dedede"></div>
<div class="a" style="left:7.900px;top:205.300px;width:308.400px;height:65.600px;background:#fff;border-radius:5px;border:1.100px solid #e5e5ea"></div>
<svg style="left:24px;top:227px" width="24" height="24" viewBox="0 0 24 24"><circle cx="10.700" cy="10.100" r="8.500" fill="none" stroke="#3a97d4" stroke-width="1.600"/><path d="M17 16.300 L20.400 19.300" stroke="#3a97d4" stroke-width="1.600" stroke-linecap="round"/></svg>
<span class="t" style="left:58.99px;top:227px;font-size:23px;line-height:23px;color:#a7a8ae;transform:scaleX(0.9485);">Rechercher</span>
<div class="a" style="left:0;top:285px;width:330px;height:87px;background:#fff;border-bottom:1px solid #ececec"></div>
<svg style="left:42px;top:327px" width="1" height="1"><g transform="translate(0.000,0.800)"><g fill="none" stroke="#9a9a9a" stroke-width="1.9" stroke-linecap="round" stroke-linejoin="round"><path d="M-15.5 1 L2 -15 L19.5 1 M-11 -3 V12.5 a3 3 0 0 0 3 3 H12 a3 3 0 0 0 3 -3 V-3 M-1.800 15.500 V4 H5.800 V15.500"/></g></g></svg>
<span class="t" style="left:87.48px;top:316px;font-size:23px;line-height:23px;color:#9a9a9a;transform:scaleX(0.8861);">ACCUEIL</span>
<div class="a" style="left:0;top:372px;width:330px;height:87px;background:#fff;border-bottom:1px solid #ececec"></div>
<svg style="left:42px;top:414px" width="1" height="1"><g transform="translate(0.000,0.800)"><g fill="none" stroke="#9a9a9a" stroke-width="1.9" stroke-linecap="round" stroke-linejoin="round"><rect x="-15" y="-8" width="30" height="21.5" rx="3"/><path d="M-7.5 -8 V-11.5 a2.5 2.5 0 0 1 2.5 -2.5 H5 a2.5 2.5 0 0 1 2.5 2.5 V-8 M-15 1 H15 M-4 1 V5 H4 V1"/></g></g></svg>
<span class="t" style="left:87.48px;top:403px;font-size:23px;line-height:23px;color:#9a9a9a;transform:scaleX(0.8789);">AFFAIRES</span>
<div class="a" style="left:0;top:459px;width:330px;height:87px;background:#f0f0f0;border-bottom:1px solid #ececec"></div>
<svg style="left:38px;top:501px" width="1" height="1"><g transform="translate(0.000,0.800)"><g fill="none" stroke="#3d4459" stroke-width="2.0" stroke-linecap="round" stroke-linejoin="round"><rect x="-11" y="-15" width="22" height="30" rx="3"/><rect x="-7" y="-9" width="4" height="4" rx=".8"/><rect x="3" y="-9" width="4" height="4" rx=".8"/><rect x="-7" y="-1" width="4" height="4" rx=".8"/><rect x="3" y="-1" width="4" height="4" rx=".8"/><path d="M-3.5 15 V10 a3.5 3.5 0 0 1 7 0 V15"/></g></g></svg>
<span class="t b" style="left:86.59px;top:490px;font-size:23px;line-height:23px;color:#3d4459;font-weight:700;transform:scaleX(0.9229);">COMPTES</span>
<div class="a" style="left:0;top:546px;width:330px;height:87px;background:#fff;border-bottom:1px solid #ececec"></div>
<svg style="left:38px;top:588px" width="1" height="1"><g transform="translate(0.000,0.800)"><g fill="none" stroke="#9a9a9a" stroke-width="1.9" stroke-linecap="round" stroke-linejoin="round"><circle cx="2" cy="-8" r="7.5"/><path d="M-11.5 15 V13 a8 8 0 0 1 8 -8 H7.5 a8 8 0 0 1 8 8 V15 Z"/></g></g></svg>
<span class="t" style="left:86.58px;top:577px;font-size:23px;line-height:23px;color:#9a9a9a;transform:scaleX(0.9088);">CONTACTS</span>
<div class="a" style="left:0;top:633px;width:330px;height:87px;background:#fff;border-bottom:1px solid #ececec"></div>
<svg style="left:42px;top:675px" width="1" height="1"><g transform="translate(0.000,0.800)"><g fill="none" stroke="#9a9a9a" stroke-width="1.9" stroke-linecap="round" stroke-linejoin="round"><path d="M14.10 -5.13 A15.00 15.00 0 1 1 3.88 -14.49"/><path d="M8.97 -0.78 A9.00 9.00 0 1 1 -0.78 -8.97"/><path d="M0 0 L10.17 -10.17 M5.50 -5.83 L3.92 -10.75 L8.25 -15.17 L10.17 -10.17 L15.17 -8.25 L10.75 -3.92 Z"/></g></g></svg>
<span class="t" style="left:86.57px;top:664px;font-size:23px;line-height:23px;color:#9a9a9a;transform:scaleX(0.9193);">CAMPAGNES</span>
<div class="a" style="left:0;top:720px;width:330px;height:87px;background:#fff;border-bottom:1px solid #ececec"></div>
<svg style="left:42px;top:762px" width="1" height="1"><g transform="translate(0.000,0.800)"><g fill="none" stroke="#9a9a9a" stroke-width="1.9" stroke-linecap="round" stroke-linejoin="round"><path d="M-13.5 -13 C-16 -10 -16 -4 -9 4.5 C-2 13 6 16 11.5 14.5 C14 14 15.5 11 15.5 8 C15.5 7 15 6.3 14 5.8 L8 3 C7 2.6 6 2.8 5.2 3.6 L2.5 6.3 C-2 4 -5.5 0.5 -7.5 -4 L-4.8 -6.5 C-4 -7.3 -3.8 -8.3 -4.2 -9.3 L-7 -15 C-7.5 -16 -8.5 -16.4 -9.5 -16 C-11 -15.5 -12.5 -14.3 -13.5 -13 Z"/></g></g></svg>
<span class="t" style="left:87.06px;top:751px;font-size:23px;line-height:23px;color:#9a9a9a;transform:scaleX(0.9051);">TICKETS</span>
<div class="a" style="left:0;top:807px;width:330px;height:87px;background:#fff;border-bottom:1px solid #ececec"></div>
<svg style="left:42px;top:849px" width="1" height="1"><g transform="translate(0.000,0.800)"><g fill="none" stroke="#9a9a9a" stroke-width="1.9" stroke-linecap="round" stroke-linejoin="round"><path d="M-15.5 -3.5 L-5 -12 L3 -5 L15.5 -14"/><rect x="-14.500" y="5" width="4.600" height="7.500" rx="2.300"/><rect x="-6.500" y="-1" width="4.600" height="13.500" rx="2.300"/><rect x="1.500" y="4" width="4.600" height="8.500" rx="2.300"/><rect x="9.500" y="-1" width="4.600" height="13.500" rx="2.300"/></g></g></svg>
<span class="t" style="left:85.90px;top:838px;font-size:23px;line-height:23px;color:#9a9a9a;transform:scaleX(0.8853);">REPORTING</span>
<div class="a" style="left:0;top:894px;width:330px;height:87px;background:#fff;border-bottom:1px solid #ececec"></div>
<svg style="left:38px;top:936px" width="1" height="1"><g transform="translate(0.000,0.800)"><g fill="none" stroke="#9a9a9a" stroke-width="1.9" stroke-linecap="round" stroke-linejoin="round"><path d="M-11 -12 a3 3 0 0 1 3 -3 H3 L11 -6.500 V12 a3 3 0 0 1 -3 3 H-8 a3 3 0 0 1 -3 -3 Z M3 -15 V-6.500 H11 M-5.500 0 H5.500 M-5.500 4.500 H5.500 M-5.500 9 H5.500"/></g></g></svg>
<span class="t" style="left:85.86px;top:925px;font-size:23px;line-height:23px;color:#9a9a9a;transform:scaleX(0.9095);">DOCUMENTS</span>
<div class="a" style="left:0;top:981px;width:330px;height:87px;background:#fff;border-bottom:1px solid #ececec"></div>
<svg style="left:42px;top:1023px" width="1" height="1"><g transform="translate(0.000,0.800)"><g fill="none" stroke="#9a9a9a" stroke-width="1.9" stroke-linecap="round" stroke-linejoin="round"><path d="M-3.02 -14.90 L3.02 -14.90 L3.88 -10.29 L6.98 -8.50 L11.39 -10.06 L14.41 -4.83 L10.85 -1.79 L10.85 1.79 L14.41 4.83 L11.39 10.06 L6.98 8.50 L3.88 10.29 L3.02 14.90 L-3.02 14.90 L-3.88 10.29 L-6.98 8.50 L-11.39 10.06 L-14.41 4.83 L-10.85 1.79 L-10.85 -1.79 L-14.41 -4.83 L-11.39 -10.06 L-6.98 -8.50 L-3.88 -10.29 Z" stroke-linejoin="round"/><circle cx="0" cy="0" r="4.800"/></g></g></svg>
<span class="t" style="left:87.48px;top:1012px;font-size:23px;line-height:23px;color:#9a9a9a;transform:scaleX(0.9288);">ADMINISTRATION</span>
<svg style="left:150px;top:1438px" width="32" height="37" viewBox="0 0 32 37"><g transform="translate(0.800,0.700)"><path d="M0 6.100 L4.600 5.600 L12.400 15.400 Z" fill="#4a90d9"/><path d="M2 0 L13.700 0 L13.100 15.800 Z" fill="#5bbdf0"/><path d="M13.700 0 L24.800 11.700 L26.100 14.800 L16.700 19.500 L12.700 15.700 Z" fill="#3f9fe0"/><path d="M3 1 L12.700 15.900 L16.700 19.700 L26 15" fill="none" stroke="#cfe9fa" stroke-width=".6"/><path d="M24.600 11.200 L29.400 10.600 L31.400 14.700 L28.900 13.700 L27.400 16.900 L25.500 14 Z" fill="#4a9fe0"/><path d="M12.600 16.500 L16.700 20 L26 15.300 L27.900 16.700 L15.600 25.600 Z" fill="#3f9fe0"/><path d="M12.600 16.500 L15.700 25.500 L10.600 36.200 L7.700 35.100 Z" fill="#4aa9e3"/><circle cx="19.600" cy="13.600" r=".6" fill="#fff"/></g></svg><span class="t b" style="left:74.71px;top:1476px;font-size:23px;line-height:23px;color:#0c0c0c;font-weight:700;transform:scaleX(1.0305);letter-spacing:.5px;-webkit-text-stroke:.6px;">MOBI</span><span class="t b" style="left:137.96px;top:1476px;font-size:23px;line-height:23px;color:#3d9de0;font-weight:700;transform:scaleX(0.9818);letter-spacing:.5px;-webkit-text-stroke:.6px;">FACTORY</span>
<span class="t" style="left:84.05px;top:1514px;font-size:18px;line-height:18px;color:#999;transform:scaleX(0.9670);">MobiCRM v3.21 r13</span>
<span class="t" style="left:29.10px;top:1534px;font-size:18px;line-height:18px;color:#999;transform:scaleX(0.9688);">Powered by MobiFactory - © 2023</span>
<span class="t" style="left:67.08px;top:1566px;font-size:18px;line-height:18px;color:#3a97d4;transform:scaleX(1.0567);">Documentation &amp; aide</span>
<div class="a" style="left:-2px;top:1572px;width:1009.700px;height:20px;background:#dcdde0;border:1px solid #bcbdc0;border-radius:0 7px 0 0;box-shadow:0 0 14px rgba(0,0,0,.07)"></div>
</div>
</body></html>
